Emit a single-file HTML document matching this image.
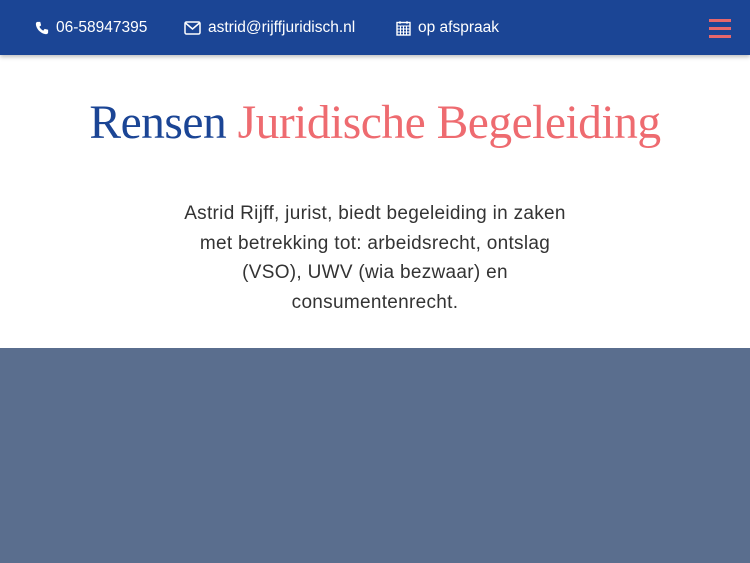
<!DOCTYPE html>
<html><head><meta charset="utf-8"><style>
body{margin:0;width:750px;height:563px;overflow:hidden;background:#fff;font-family:"Liberation Sans",sans-serif}
.top{position:absolute;left:0;top:0;width:750px;height:55px;background:#1b4595;box-shadow:0 2px 4px rgba(0,0,0,.25);color:#fff;font-size:15.5px}
.it{position:absolute;top:18px;line-height:20px;display:flex;align-items:center;gap:7px}
.burger{position:absolute;left:709px;top:19px;width:22px}
.burger div{height:3px;background:#e8676b;margin-bottom:5px}
h1{position:absolute;top:93px;left:0;width:750px;text-align:center;margin:0;font-family:"Liberation Serif",serif;font-weight:normal;font-size:47.5px;line-height:60px;letter-spacing:-0.5px}
p{position:absolute;top:199px;left:100px;width:550px;text-align:center;margin:0;font-size:19px;letter-spacing:0.3px;line-height:29.5px;color:#333}
.bot{position:absolute;top:348px;left:0;width:750px;height:215px;background:#5a6e8e}
</style></head><body>
<div class="top">
<div class="it" style="left:35px"><svg width="14" height="14" viewBox="0 0 16 16"><path d="M3 1l3 0 1 4-2 1.5c1 2 2.5 3.5 4.5 4.5L11 9l4 1v3c0 1-1 2-2 2C7 15 1 9 1 3c0-1 1-2 2-2z" fill="#fff"/></svg>06-58947395</div>
<div class="it" style="left:184px"><svg width="17" height="14" viewBox="0 0 17 14"><rect x="1" y="1" width="15" height="12" rx="1.5" fill="none" stroke="#fff" stroke-width="1.5"/><path d="M1.5 2l7 6 7-6" fill="none" stroke="#fff" stroke-width="1.5"/></svg>astrid@rijffjuridisch.nl</div>
<div class="it" style="left:396px"><svg width="15" height="16" viewBox="0 0 15 16"><rect x="1" y="2.5" width="13" height="12.5" fill="none" stroke="#fff" stroke-width="1.4"/><path d="M1 6h13M4 1v3M11 1v3M1 9h13M1 12h13M4.5 6v9M7.5 6v9M10.5 6v9" stroke="#fff" stroke-width="1"/></svg>op afspraak</div>
<div class="burger"><div></div><div></div><div></div></div>
</div>
<h1><span style="color:#1b4595">Rensen</span> <span style="color:#ee6b70">Juridische Begeleiding</span></h1>
<p>Astrid Rijff, jurist, biedt begeleiding in zaken<br>met betrekking tot: arbeidsrecht, ontslag<br>(VSO), UWV (wia bezwaar) en<br>consumentenrecht.</p>
<div class="bot"></div>
</body></html>
